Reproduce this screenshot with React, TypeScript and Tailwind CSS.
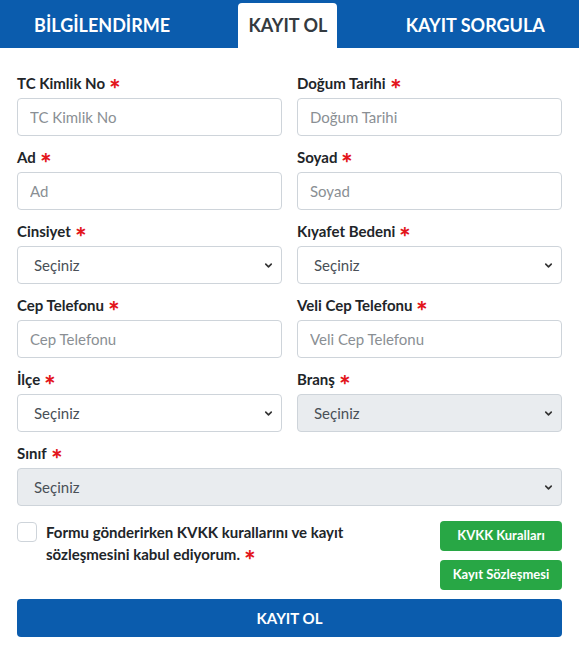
import { ChevronDown } from 'lucide-react'

const Star = () => <span className="ml-[4px] text-[#e3161b] text-[14px] leading-none">∗</span>

function Label({ text }: { text: string }) {
  return (
    <label className="flex items-center h-[22px] mb-1 text-[15px] font-bold text-[#212529]">
      {text}
      <Star />
    </label>
  )
}

function Input({ label }: { label: string }) {
  return (
    <div className="mb-[10px]">
      <Label text={label} />
      <input
        placeholder={label}
        className="w-full h-[38px] px-3 rounded border border-[#ced4da] bg-white text-[15px] text-[#495057] placeholder:text-[#8a8f94] outline-none"
      />
    </div>
  )
}

function Select({ label, disabled }: { label: string; disabled?: boolean }) {
  return (
    <div className="mb-[10px]">
      <Label text={label} />
      <div
        className={`relative w-full h-[38px] rounded border border-[#ced4da] flex items-center pl-4 text-[15px] text-[#495057] ${
          disabled ? 'bg-[#e9ecef]' : 'bg-white'
        }`}
      >
        Seçiniz
        <ChevronDown className="absolute right-[7px] top-[13px] w-[11px] h-[11px] text-[#333]" strokeWidth={3.5} />
      </div>
    </div>
  )
}

export default function App() {
  const tabs = ['BİLGİLENDİRME', 'KAYIT OL', 'KAYIT SORGULA']

  return (
    <div className="w-[579px] bg-white" style={{ fontFamily: 'Lato, "Liberation Sans", sans-serif' }}>
      {/* Tabs */}
      <div className="h-12 bg-[#0b5cad] flex justify-around items-end">
        {tabs.map(t => (
          <div
            key={t}
            className={`h-[45px] flex items-center text-[18px] font-bold ${
              t === 'KAYIT OL' ? 'bg-white text-[#343a40] rounded-t px-[10px]' : 'text-white'
            }`}
          >
            {t}
          </div>
        ))}
      </div>

      {/* Form */}
      <div className="px-[17px] pt-6">
        <div className="grid grid-cols-2 gap-x-[15px]">
          <Input label="TC Kimlik No" />
          <Input label="Doğum Tarihi" />
          <Input label="Ad" />
          <Input label="Soyad" />
          <Select label="Cinsiyet" />
          <Select label="Kıyafet Bedeni" />
          <Input label="Cep Telefonu" />
          <Input label="Veli Cep Telefonu" />
          <Select label="İlçe" />
          <Select label="Branş" disabled />
        </div>
        <Select label="Sınıf" disabled />

        <div className="flex mt-[15px]">
          <div className="w-[20px] h-[20px] border border-[#ced4da] rounded-sm bg-white shrink-0 mt-[1px]" />
          <div className="ml-[9px] w-[330px] text-[15px] font-bold text-[#212529] leading-[22px]">
            <div>Formu gönderirken KVKK kurallarını ve kayıt</div>
            <div className="flex items-center">
              sözleşmesini kabul ediyorum.
              <Star />
            </div>
          </div>
          <div className="ml-auto flex flex-col gap-[9px] w-[122px]">
            <button className="h-[30px] rounded bg-[#28a745] text-white text-[13px] font-bold">KVKK Kuralları</button>
            <button className="h-[30px] rounded bg-[#28a745] text-white text-[13px] font-bold">Kayıt Sözleşmesi</button>
          </div>
        </div>

        <button className="mt-[9px] w-full h-[38px] rounded bg-[#0b5cad] text-white text-[15px] font-bold">
          KAYIT OL
        </button>
      </div>
    </div>
  )
}
